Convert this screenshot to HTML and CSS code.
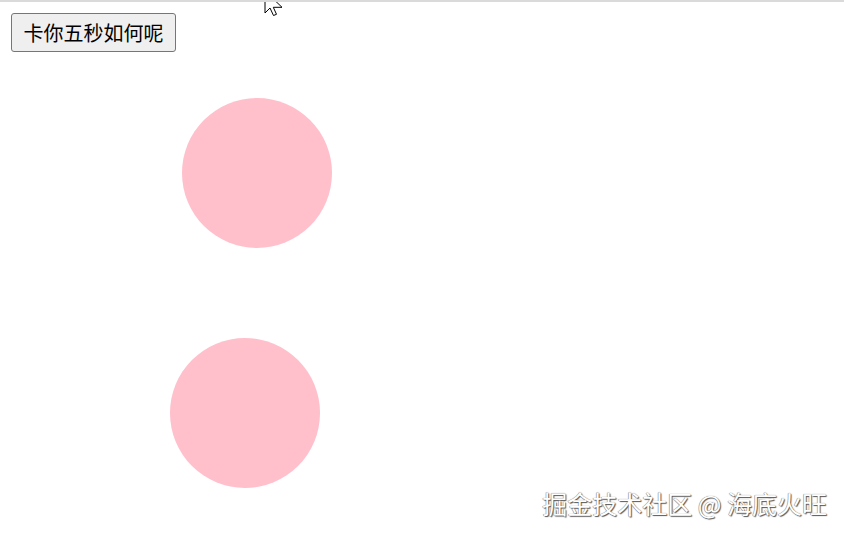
FILE: index.html
```html
<!DOCTYPE html>
<html lang="zh">
<head>
<meta charset="utf-8">
<link rel="stylesheet" href="styles.css">
</head>
<body>
<div class="page">
  <button class="btn">卡你五秒如何呢</button>
  <div class="balls">
    <div class="ball ball-1"></div>
    <div class="ball ball-2"></div>
  </div>
</div>
<div class="watermark">掘金技术社区 @ 海底火旺</div>
<svg class="cursor" width="22" height="30" viewBox="0 0 22 30">
  <path d="M1 1 L1 23 L6 18 L9.5 25.5 L12.5 24.3 L9.3 17.3 L18 17.3 Z" fill="#fff" stroke="#000" stroke-width="1" stroke-linejoin="miter"/>
</svg>
</body>
</html>
```
FILE: styles.css
```css
html, body {
  margin: 0;
  padding: 0;
  background: #fff;
}
body {
  border-top: 2px solid #dadada;
  width: 844px;
  height: 532px;
  overflow: hidden;
  position: relative;
  font-family: "Noto Sans CJK SC", "Liberation Sans", sans-serif;
}
.page {
  padding: 11px 0 0 11px;
  display: flex;
  flex-direction: column;
  align-items: flex-start;
}
.btn {
  width: 165px;
  height: 39px;
  padding: 0;
  font-family: "Noto Sans CJK SC", sans-serif;
  font-size: 20px;
  color: #000;
  background: #efefef;
  border: 1px solid #767676;
  border-radius: 3px;
  line-height: 1;
}
.balls {
  display: flex;
  flex-direction: column;
  gap: 90px;
  margin-top: 46px;
}
.ball {
  width: 150px;
  height: 150px;
  border-radius: 50%;
  background: #ffc0cb;
}
.ball-1 { margin-left: 171px; }
.ball-2 { margin-left: 159px; }
.watermark {
  position: absolute;
  right: 17px;
  bottom: 16px;
  font-size: 25px;
  line-height: 30px;
  color: #fff;
  text-shadow: 1px 1px 1px #555, -0.5px -0.5px 0 #999, 0 0 1px #777;
}
.cursor {
  position: absolute;
  left: 264px;
  top: -12px;
}
```
